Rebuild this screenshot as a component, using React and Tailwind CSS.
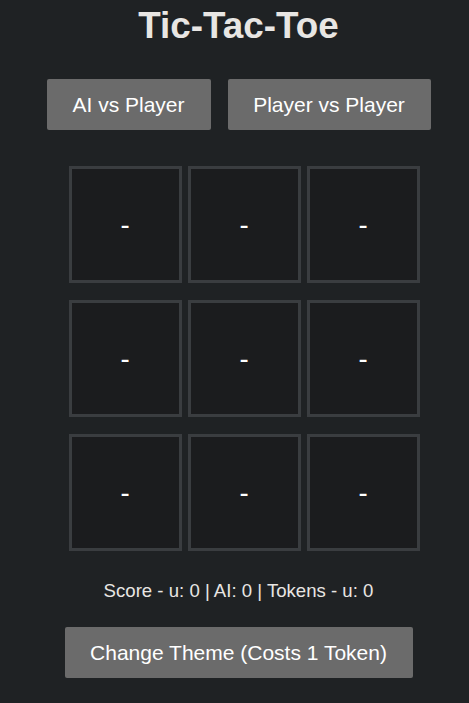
export default function App() {
  const cells = Array(9).fill('-');

  return (
    <div className="min-h-[703px] bg-[#1f2224] pl-[8px] font-['Liberation_Sans',Arial,sans-serif] text-[#e8e6e3]">
      <h1 className="pt-[5px] text-center text-[36.8px] font-bold leading-[42px]">Tic-Tac-Toe</h1>

      <div className="mt-[32px] flex justify-center gap-[17px]">
        <button className="h-[51px] w-[164px] rounded-[2px] bg-[#6b6b6b] text-[21px] text-white">
          AI vs Player
        </button>
        <button className="h-[51px] w-[203px] rounded-[2px] bg-[#6b6b6b] text-[21px] text-white">
          Player vs Player
        </button>
      </div>

      <div className="mt-[36px] flex justify-center pl-[11px]">
        <div className="grid grid-cols-[113px_113px_113px] gap-x-[6px] gap-y-[17px]">
          {cells.map((c, i) => (
            <div
              key={i}
              className="flex h-[117px] items-center justify-center border-[3px] border-[#3a3d40] bg-[#1b1c1e] text-[27.6px] text-white"
            >
              {c}
            </div>
          ))}
        </div>
      </div>

      <p className="mt-[29px] text-center text-[18.6px] leading-[21px] text-[#e8e6e3]">
        Score - u: 0 | AI: 0 | Tokens - u: 0
      </p>

      <div className="mt-[26px] flex justify-center">
        <button className="h-[51px] w-[348px] rounded-[2px] bg-[#6b6b6b] text-[21px] text-white">
          Change Theme (Costs 1 Token)
        </button>
      </div>
    </div>
  );
}
